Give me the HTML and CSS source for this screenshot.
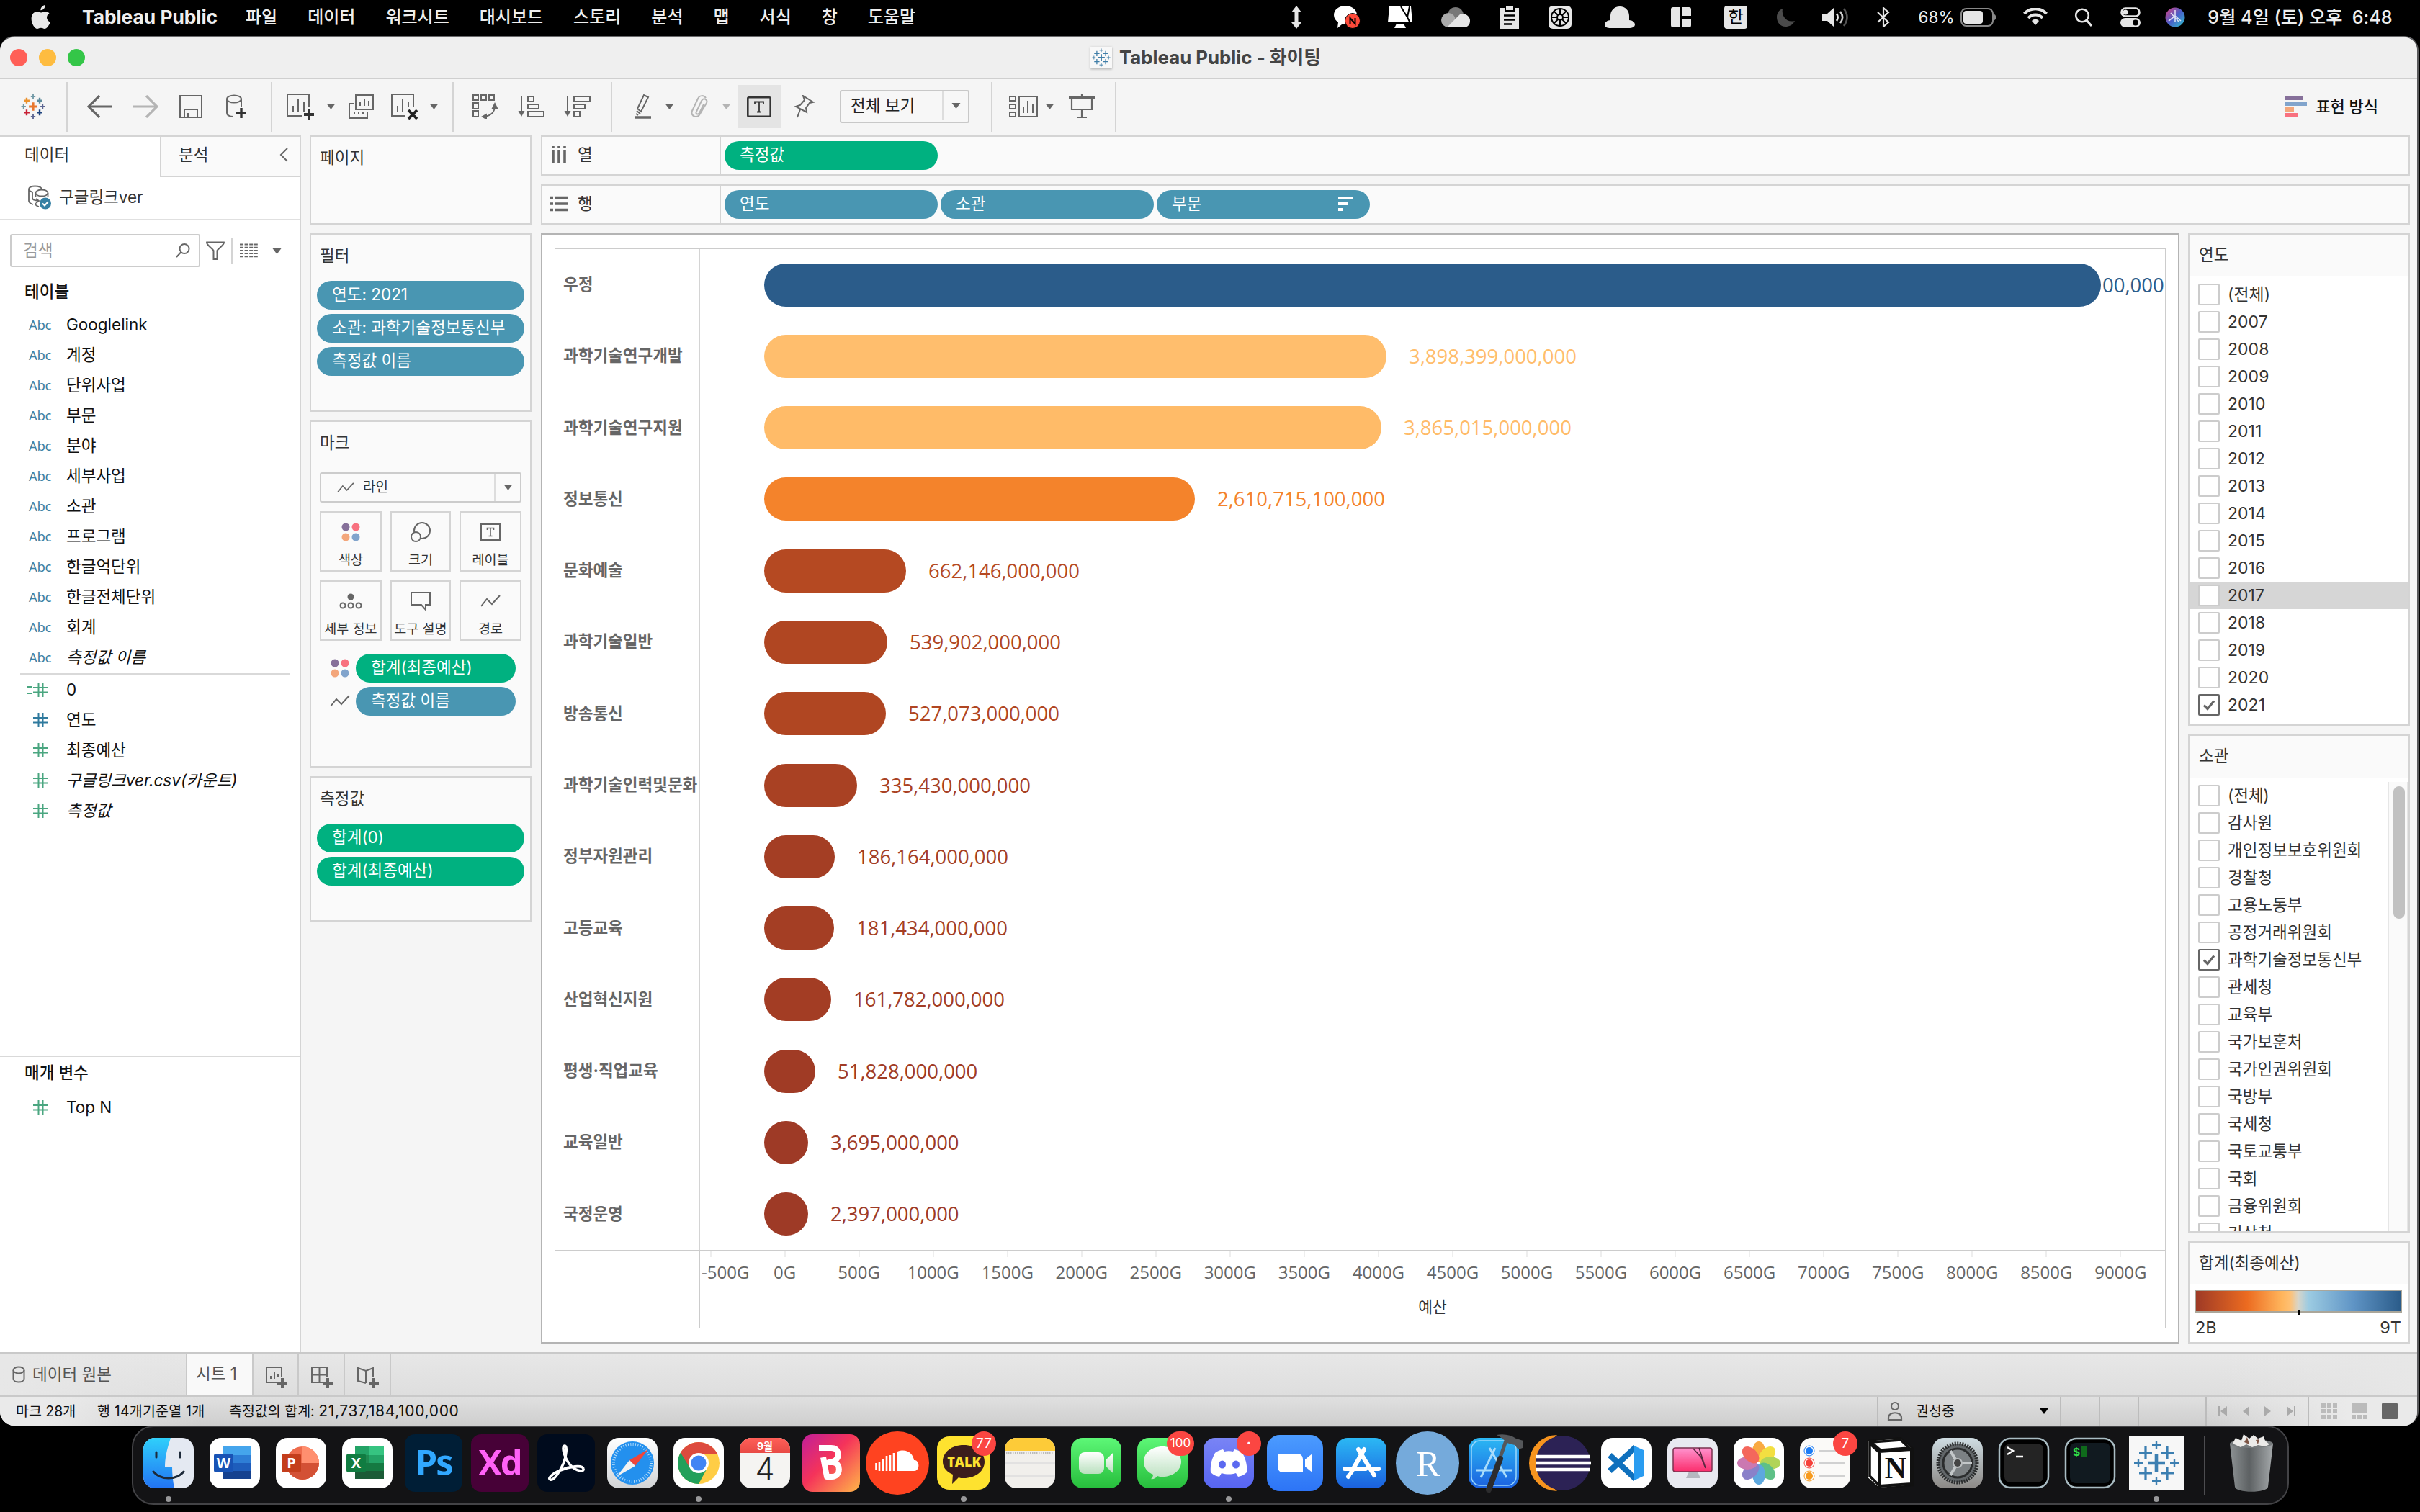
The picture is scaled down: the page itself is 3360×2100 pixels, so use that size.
FILE: index.html
```html
<!DOCTYPE html>
<html lang="ko">
<head>
<meta charset="utf-8">
<title>Tableau Public - 화이팅</title>
<link rel="stylesheet" href="styles.css">
</head>
<body>
<svg class="defs" width="0" height="0">
  <defs>
    <linearGradient id="gFinder" x1="0" y1="0" x2="0" y2="1"><stop offset="0" stop-color="#2fd0fb"/><stop offset="1" stop-color="#2273f3"/></linearGradient>
    <linearGradient id="gSilver" x1="0" y1="0" x2="0" y2="1"><stop offset="0" stop-color="#ffffff"/><stop offset="1" stop-color="#d2d4d6"/></linearGradient>
    <linearGradient id="gGreen" x1="0" y1="0" x2="0" y2="1"><stop offset="0" stop-color="#5df777"/><stop offset="1" stop-color="#27be3c"/></linearGradient>
    <linearGradient id="gGlass" x1="0" y1="0" x2="0" y2="1"><stop offset="0" stop-color="#ffffff"/><stop offset="1" stop-color="#b9e0be"/></linearGradient>
    <linearGradient id="gBlue" x1="0" y1="0" x2="0" y2="1"><stop offset="0" stop-color="#2bb8f4"/><stop offset="1" stop-color="#1b60df"/></linearGradient>
    <linearGradient id="gZoom" x1="0" y1="0" x2="0" y2="1"><stop offset="0" stop-color="#4b9bff"/><stop offset="1" stop-color="#2d74f6"/></linearGradient>
    <linearGradient id="gDiscord" x1="0" y1="0" x2="0" y2="1"><stop offset="0" stop-color="#7984f5"/><stop offset="1" stop-color="#5765f2"/></linearGradient>
    <linearGradient id="gBand" x1="0" y1="0" x2="1" y2="1"><stop offset="0" stop-color="#c01f9a"/><stop offset=".45" stop-color="#f5335a"/><stop offset="1" stop-color="#ffb648"/></linearGradient>
    <linearGradient id="gRed" x1="0" y1="0" x2="0" y2="1"><stop offset="0" stop-color="#ff5f58"/><stop offset="1" stop-color="#e84a45"/></linearGradient>
    <linearGradient id="gPink" x1="0" y1="0" x2="0" y2="1"><stop offset="0" stop-color="#ff93cf"/><stop offset="1" stop-color="#fb2d6c"/></linearGradient>
    <linearGradient id="gGear" x1="0" y1="0" x2="0" y2="1"><stop offset="0" stop-color="#cfdde3"/><stop offset="1" stop-color="#8c8986"/></linearGradient>
    <linearGradient id="gTrash" x1="0" y1="0" x2="1" y2="0"><stop offset="0" stop-color="#8d9294"/><stop offset=".45" stop-color="#5d6163"/><stop offset="1" stop-color="#a5a9ab"/></linearGradient>
    <linearGradient id="gSiri" x1="0" y1="0" x2="1" y2="1"><stop offset="0" stop-color="#e0407e"/><stop offset=".5" stop-color="#4a5fc9"/><stop offset="1" stop-color="#2ec6cf"/></linearGradient>
    <symbol id="caret" viewBox="0 0 12 8"><path d="M0 0h12L6 8z" fill="currentColor"/></symbol>
    <symbol id="hash" viewBox="0 0 20 20"><path d="M7.500 0v20M13.500 0v20M0 7h20M0 13.500h20" stroke="currentColor" stroke-width="2" fill="none"/></symbol>
    <symbol id="trend" viewBox="0 0 28 18"><path d="M1 16 9 6l7 7L27 1" stroke="#666" stroke-width="2" fill="none"/></symbol>
    <symbol id="dots" viewBox="0 0 26 26"><circle cx="6" cy="6" r="5.500" fill="#86709a"/><circle cx="20" cy="6" r="5.500" fill="#f8717f"/><circle cx="6" cy="20" r="5.500" fill="#f3a67b"/><circle cx="20" cy="20" r="5.500" fill="#81a4cc"/></symbol>
    <symbol id="tick" viewBox="0 0 30 30"><path d="m8 15.500 5 5 9-11" stroke="#666" stroke-width="3.200" fill="none"/></symbol>
    <symbol id="tableau" viewBox="0 0 64 64">
      <path d="M32 20v24M20 32h24" stroke-width="4.600"/><path d="M17 9v18M8 18h18M47 9v18M38 18h18M17 37v18M8 46h18M47 37v18M38 46h18" stroke-width="3.200"/><path d="M32 1v12M26 7h12M32 51v12M26 57h12M7 26v12M1 32h12M57 26v12M51 32h12" stroke-width="2.400"/>
    </symbol>
  </defs>
</svg>

<header class="menubar">
  <svg class="apple" width="28" height="34" viewBox="0 0 28 34"><path d="M19.800 0c.3 3.700-3 7.400-6.400 7.200C13 3.800 16.300.4 19.800 0zM25.500 11.600c-5.300 3.200-4.300 9.900 1.300 12.200C25.300 28.200 22 33 18.900 33c-2 0-2.700-1.200-5-1.200S10.600 33 8.800 33C5 33 .6 25.600.6 19 .6 12.500 4.700 9 8.600 9c2.200 0 4 1.500 5.500 1.500 1.400 0 3.500-1.600 6.200-1.600 2 0 4 .9 5.200 2.700z" fill="#e8e8e8"/></svg>
  <b class="app-name">Tableau Public</b>
  <nav class="menus"><span>파일</span><span>데이터</span><span>워크시트</span><span>대시보드</span><span>스토리</span><span>분석</span><span>맵</span><span>서식</span><span>창</span><span>도움말</span></nav>
  <div class="tray">
    <svg width="18" height="32" viewBox="0 0 18 32"><path d="m9 0 7 9h-4.500v14H16l-7 9-7-9h4.500V9H2z" fill="#e6e6e6"/></svg>
    <svg width="38" height="34" viewBox="0 0 38 34"><path d="M17 1c9 0 16 5.500 16 13S26 27 17 27c-2 0-4 0-5 0l-6 5 1-8C3 21 1 18 1 14 1 6.500 8 1 17 1z" fill="#fff"/><circle cx="27" cy="22" r="10.500" fill="#ff4a3a" stroke="#000"/><path d="M23.500 26v-8l7 8v-8" stroke="#000" stroke-width="2" fill="none"/></svg>
    <svg width="38" height="32" viewBox="0 0 38 32"><path d="M4 1h30l2 22H2zM14 25h10l3 6H11z" fill="#fff"/><path d="m20 1 9 15 3-15M29 16l3 6" stroke="#000" stroke-width="2" fill="none"/></svg>
    <svg width="42" height="28" viewBox="0 0 42 28"><circle cx="20" cy="11" r="11" fill="#777"/><circle cx="10" cy="18" r="10" fill="#aaa"/><path d="M8 28 27 9c8 0 13 4 13 10s-4 9-9 9z" fill="#e6e6e6"/></svg>
    <svg width="28" height="32" viewBox="0 0 28 32"><path d="M1 3h6v5h14V3h6v29H1z" fill="#e6e6e6"/><path d="M9 0h10v6H9z" fill="#e6e6e6"/><path d="M6 13.500h16M6 19.500h16M6 25.500h12" stroke="#000" stroke-width="2.400"/></svg>
    <svg width="32" height="32" viewBox="0 0 32 32"><rect width="32" height="32" rx="6" fill="#e6e6e6"/><circle cx="16" cy="16" r="12" fill="none" stroke="#000" stroke-width="2"/><circle cx="16" cy="16" r="4" fill="none" stroke="#000" stroke-width="2"/><path d="M16 4v8M16 20v8M4 16h8M20 16h8M7.500 7.500l5.500 5.500M19 19l5.500 5.500M24.500 7.500 19 13M13 19l-5.500 5.500" stroke="#000" stroke-width="2"/></svg>
    <svg width="42" height="30" viewBox="0 0 42 30"><path d="M21 0c8 0 13 6 13 13v6c4 0 8 3 8 6 0 4-5 5-8 5H8c-4 0-8-1-8-5 0-3 4-6 8-6v-6C8 6 13 0 21 0z" fill="#e6e6e6"/></svg>
    <svg width="28" height="28" viewBox="0 0 28 28"><path d="M3 0h9v28H3a3 3 0 0 1-3-3V3a3 3 0 0 1 3-3zM16 0h9a3 3 0 0 1 3 3v9H16zM16 16h12v9a3 3 0 0 1-3 3h-9z" fill="#e6e6e6"/></svg>
    <span class="ime">한</span>
    <svg width="28" height="28" viewBox="0 0 28 28"><path d="M9 2C7 13 15 22 26 19 23 25 18 27 13 27 6 27 1 21 1 14 1 8 4 4 9 2z" fill="#4a4a4a"/></svg>
    <svg width="38" height="28" viewBox="0 0 38 28"><path d="M1 9h7l9-8v26l-9-8H1z" fill="#e6e6e6"/><path d="M21 9c2 3 2 7 0 10" stroke="#e6e6e6" stroke-width="2.600" fill="none"/><path d="M26 6c4 5 4 11 0 16" stroke="#ccc" stroke-width="2.600" fill="none"/><path d="M31 2c6 8 6 16 0 24" stroke="#555" stroke-width="2.600" fill="none"/></svg>
    <svg width="20" height="28" viewBox="0 0 20 28"><path d="m2 7 15 14-7 6V1l7 6L2 21" stroke="#e6e6e6" stroke-width="2.200" fill="none"/></svg>
    <span class="battery">68%<svg width="50" height="26" viewBox="0 0 50 26"><rect x="1" y="1" width="44" height="24" rx="7" fill="none" stroke="#888" stroke-width="2"/><rect x="4" y="4" width="27" height="18" rx="4" fill="#e6e6e6"/><path d="M47 9c3 1 3 7 0 8z" fill="#888"/></svg></span>
    <svg width="34" height="25" viewBox="0 0 34 25"><path d="M1.500 8C10-1 24-1 32.500 8M7 14c5.500-6 14.500-6 20 0" stroke="#e6e6e6" stroke-width="4" fill="none"/><path d="m17 24-5-6c3-3 7-3 10 0z" fill="#e6e6e6"/></svg>
    <svg width="26" height="26" viewBox="0 0 26 26"><circle cx="11" cy="10.500" r="8.800" fill="none" stroke="#e6e6e6" stroke-width="2.600"/><path d="m17 17 7 8" stroke="#e6e6e6" stroke-width="3"/></svg>
    <svg width="28" height="28" viewBox="0 0 28 28"><rect x="1.500" y="1.500" width="25" height="11" rx="5.500" fill="none" stroke="#e6e6e6" stroke-width="2.600"/><circle cx="7" cy="7" r="3.500" fill="#e6e6e6"/><rect y="15" width="28" height="13" rx="6.500" fill="#e6e6e6"/><circle cx="21" cy="21.500" r="4" fill="#000"/></svg>
    <svg width="28" height="28" viewBox="0 0 28 28"><circle cx="14" cy="14" r="13.500" fill="url(#gSiri)"/><path d="m5 19 9-7 8 7M14 4v16M8 8l11 12" stroke="#fff" stroke-width="1.600" opacity=".8" fill="none"/></svg>
    <span class="clock">9월 4일 (토) 오후&nbsp; 6:48</span>
  </div>
</header>

<main class="window">
  <div class="titlebar">
    <div class="lights"><i class="red"></i><i class="yellow"></i><i class="green"></i></div>
    <div class="title"><span class="doc"><svg width="26" height="26" stroke="#3f7ea8"><use href="#tableau"/></svg></span>Tableau Public - 화이팅</div>
  </div>

  <div class="toolbar">
    <div class="tg tg1"><svg width="34" height="34" viewBox="0 0 64 64"><path d="M32 21v22M21 32h22" stroke="#e8762c" stroke-width="6"/><path d="M15 9v15M7.500 16.500h15" stroke="#eb912c" stroke-width="4.500"/><path d="M49 9v15M41.500 16.500h15" stroke="#5b8a9c" stroke-width="4.500"/><path d="M15 40v15M7.500 47.500h15" stroke="#c72035" stroke-width="4.500"/><path d="M49 40v15M41.500 47.500h15" stroke="#1f447e" stroke-width="4.500"/><path d="M32 0v12M26 6h12M7 26v12M1 32h12" stroke="#7199a6" stroke-width="3.500"/><path d="M57 26v12M51 32h12M32 52v12M26 58h12" stroke="#5c6692" stroke-width="3.500"/></svg></div>
    <div class="tg tg2">
      <svg width="36" height="32" viewBox="0 0 36 32"><path d="M35 16H2M17 1 2 16l15 15" stroke="#666" stroke-width="3.200" fill="none"/></svg>
      <svg width="36" height="32" viewBox="0 0 36 32"><path d="M1 16h33M19 1l15 15-15 15" stroke="#b4b4b4" stroke-width="3.200" fill="none"/></svg>
      <svg width="34" height="32" viewBox="0 0 34 32"><path d="M2 1h30v30H2zM8 31V20h18v11M13 31v-6" stroke="#666" stroke-width="2" fill="none"/></svg>
      <svg width="30" height="34" viewBox="0 0 30 34"><ellipse cx="11" cy="6.500" rx="10" ry="5" fill="none" stroke="#666" stroke-width="2"/><path d="M1 7v19c0 3 4 5 9 5M21 7v11" fill="none" stroke="#666" stroke-width="2"/><path d="M21 19v14M14 26h14" stroke="#333" stroke-width="3.400"/></svg>
    </div>
    <div class="tg tg3">
      <svg width="38" height="36" viewBox="0 0 38 36"><path d="M22 31H1V1h30v18M9 25v-8M16 25V7M24 25V12" stroke="#666" stroke-width="2" fill="none"/><path d="M31 22v14M24 29h14" stroke="#333" stroke-width="3.800"/></svg>
      <svg class="caret" width="11" height="7"><use href="#caret"/></svg>
      <svg width="36" height="34" viewBox="0 0 36 34"><path d="M10 1h24v20H10zM16 16v-5M22 16V6M28 16V9M7 13H1v20h25v-9M8 28v-4M14 28v-4M20 28v-4" stroke="#666" stroke-width="2" fill="none"/></svg>
      <svg width="38" height="36" viewBox="0 0 38 36"><path d="M20 31H1V1h30v18M9 25v-8M16 25V7M24 18v-6" stroke="#666" stroke-width="2" fill="none"/><path d="m24 23 12 12M36 23 24 35" stroke="#222" stroke-width="3.800"/></svg>
      <svg class="caret" width="11" height="7"><use href="#caret"/></svg>
    </div>
    <div class="tg tg4">
      <svg width="36" height="34" viewBox="0 0 36 34"><path d="M2 1h7v7H2zM13 1h7v7h-7zM24 1h7v7h-7zM2 12h7v8H2zM2 23h7v8H2z" stroke="#666" stroke-width="2" fill="none"/><path d="M32 16c0 8-5 14-15 15" stroke="#666" stroke-width="2" fill="none"/><path d="m32 11 4.500 9h-9zM13 31l8-4.500v9z" fill="#666"/></svg>
      <svg width="38" height="30" viewBox="0 0 38 30"><path d="M14 1h8v7h-8zM14 12h15v6H14zM14 22h22v7H14zM5 0v24" stroke="#666" stroke-width="2" fill="none"/><path d="M.5 21h9L5 29z" fill="#666"/></svg>
      <svg width="38" height="30" viewBox="0 0 38 30"><path d="M14 1h22v7H14zM14 12h15v6H14zM14 22h8v7h-8zM5 0v24" stroke="#666" stroke-width="2" fill="none"/><path d="M.5 21h9L5 29z" fill="#666"/></svg>
    </div>
    <div class="tg tg5">
      <svg width="24" height="34" viewBox="0 0 24 34"><path d="m4 20 9-19 6 3-10 20zM3 23l5 4M2 27l3 2" stroke="#666" stroke-width="2" fill="none"/><path d="M1 32h22" stroke="#666" stroke-width="3.500"/></svg>
      <svg class="caret" width="11" height="7"><use href="#caret"/></svg>
      <svg width="26" height="32" viewBox="0 0 26 32"><path d="m19 13-6 12c-2 3-6 1-4-2l7-15c3-5 9-2 7 3L14 26c-3 7-14 4-11-4L11 5c2-5 8-5 11-1" stroke="#b4b4b4" stroke-width="2" fill="none"/></svg>
      <svg class="caret light" width="11" height="7"><use href="#caret"/></svg>
      <span class="toggled"><svg width="34" height="29" viewBox="0 0 34 29"><rect x="1.300" y="1.300" width="31.400" height="26.400" rx="1.500" fill="none" stroke="#333" stroke-width="2.600"/><path d="M11 11V7.500h12V11M17 7.500v14M14 21.500h6" stroke="#333" stroke-width="1.800" fill="none"/></svg></span>
      <svg width="28" height="32" viewBox="0 0 28 32"><path d="m12 1 14 9-5 1-5 7 1 6L2 16l6-2 6-7zM8 20l-4 11" stroke="#666" stroke-width="2" fill="none"/></svg>
      <div class="select"><span>전체 보기</span><em><svg class="caret" width="13" height="8"><use href="#caret"/></svg></em></div>
    </div>
    <div class="tg tg6">
      <svg width="40" height="30" viewBox="0 0 40 30"><path d="M1 1h8v6H1zM1 12h8v6H1zM1 23h8v6H1zM14 1h25v28H14zM20 24v-9M26 24V7M33 24V12" stroke="#666" stroke-width="2" fill="none"/></svg>
      <svg class="caret" width="11" height="7"><use href="#caret"/></svg>
      <svg width="36" height="34" viewBox="0 0 36 34"><path d="M0 4.500h36" stroke="#666" stroke-width="4.500"/><path d="M18 0v4M4 6v15h28V6M18 21v11M11 32h14" stroke="#666" stroke-width="2.200" fill="none"/></svg>
    </div>
    <div class="showme"><svg width="32" height="32" viewBox="0 0 32 32"><path d="M0 1h25v6H0z" fill="#86709a"/><path d="M0 9h31v6H0z" fill="#81a4cc"/><path d="M0 17h13v6H0z" fill="#f3a67b"/><path d="M0 25h19v6H0z" fill="#f8717f"/></svg>표현 방식</div>
  </div>

  <div class="content">
    <aside class="datapane">
      <div class="tabs"><div class="tab on">데이터</div><div class="tab">분석<svg width="12" height="20" viewBox="0 0 12 20"><path d="m11 1-9 9 9 9" stroke="#666" stroke-width="2" fill="none"/></svg></div></div>
      <div class="source"><svg width="34" height="34" viewBox="0 0 34 34"><path d="M2 6v16c0 3 3 4 6 5M2 6c0-6 17-6 18 0M2 6c1 3 3 3 6 4M7 10v8c0 3 3 3 8 4M12 19l4 3-4 3" stroke="#666" stroke-width="1.800" fill="none"/><ellipse cx="20" cy="11" rx="8.500" ry="4.500" fill="none" stroke="#666" stroke-width="1.800"/><path d="M11.500 12v5M28.500 11v6M11 25c0 3 1 4 5 5" stroke="#666" stroke-width="1.800" fill="none"/><circle cx="25" cy="25.500" r="8" fill="#3580a4"/><path d="m21 25.500 3 3 5-5.500" stroke="#fff" stroke-width="2" fill="none"/></svg><span>구글링크ver</span></div>
      <div class="searchrow">
        <div class="search"><span>검색</span><svg width="20" height="20" viewBox="0 0 20 20"><circle cx="12" cy="7.500" r="6.500" fill="none" stroke="#666" stroke-width="2"/><path d="m7.500 12-6.500 7" stroke="#666" stroke-width="2"/></svg></div>
        <svg class="funnel" width="28" height="26" viewBox="0 0 28 26"><path d="M2 1.500h24c1 3-8 9-9.500 11.500V25h-5V13C10 10.500 1 4.500 2 1.500z" stroke="#666" stroke-width="2" fill="none"/></svg>
        <i class="vr"></i>
        <svg class="tbl" width="25" height="20" viewBox="0 0 25 20"><path d="M0 1.500h25M0 5.700h25M0 9.900h25M0 14.100h25M0 18.300h25" stroke="#666" stroke-width="2" stroke-dasharray="5 1.600"/></svg>
        <svg class="caret" width="15" height="9"><use href="#caret"/></svg>
      </div>
      <h3>테이블</h3>
      <ul class="fields">
        <li><i>Abc</i>Googlelink</li><li><i>Abc</i>계정</li><li><i>Abc</i>단위사업</li><li><i>Abc</i>부문</li><li><i>Abc</i>분야</li><li><i>Abc</i>세부사업</li><li><i>Abc</i>소관</li><li><i>Abc</i>프로그램</li><li><i>Abc</i>한글억단위</li><li><i>Abc</i>한글전체단위</li><li><i>Abc</i>회계</li><li class="it"><i>Abc</i>측정값 이름</li>
      </ul>
      <ul class="fields measures">
        <li><i class="calc"><svg width="20" height="20"><use href="#hash"/></svg></i>0</li>
        <li><i class="blue"><svg width="20" height="20"><use href="#hash"/></svg></i>연도</li>
        <li><i><svg width="20" height="20"><use href="#hash"/></svg></i>최종예산</li>
        <li class="it"><i><svg width="20" height="20"><use href="#hash"/></svg></i>구글링크ver.csv(카운트)</li>
        <li class="it"><i><svg width="20" height="20"><use href="#hash"/></svg></i>측정값</li>
      </ul>
      <div class="params"><h3>매개 변수</h3><ul class="fields measures"><li><i><svg width="20" height="20"><use href="#hash"/></svg></i>Top N</li></ul></div>
    </aside>

    <div class="cards">
      <section class="card pages"><h4>페이지</h4></section>
      <section class="card filters"><h4>필터</h4><div class="pill b">연도: 2021</div><div class="pill b">소관: 과학기술정보통신부</div><div class="pill b">측정값 이름</div></section>
      <section class="card marks"><h4>마크</h4>
        <div class="marktype"><svg width="24" height="15"><use href="#trend"/></svg><span>라인</span><em><svg class="caret" width="13" height="8"><use href="#caret"/></svg></em></div>
        <div class="buttons">
          <div><svg width="26" height="26"><use href="#dots"/></svg>색상</div>
          <div><svg width="28" height="28" viewBox="0 0 28 28"><circle cx="16" cy="12" r="11" fill="none" stroke="#666" stroke-width="2"/><circle cx="7.500" cy="20.500" r="6.500" fill="#fafafa" stroke="#666" stroke-width="2"/></svg>크기</div>
          <div><svg width="28" height="24" viewBox="0 0 28 24"><rect x="1" y="1" width="26" height="22" fill="none" stroke="#666" stroke-width="2"/><path d="M9.500 9V6.500h9V9M14 6.500v11M11.500 17.500h5" stroke="#666" stroke-width="1.600" fill="none"/></svg>레이블</div>
          <div><svg width="32" height="22" viewBox="0 0 32 22"><circle cx="16" cy="5" r="4.500" fill="#666"/><circle cx="5" cy="17" r="3.500" fill="none" stroke="#666" stroke-width="2"/><circle cx="16" cy="17" r="3.500" fill="none" stroke="#666" stroke-width="2"/><circle cx="27" cy="17" r="3.500" fill="none" stroke="#666" stroke-width="2"/></svg>세부 정보</div>
          <div><svg width="28" height="26" viewBox="0 0 28 26"><path d="M1 1h26v17h-6v7l-6-7H1z" fill="none" stroke="#666" stroke-width="2"/></svg>도구 설명</div>
          <div><svg width="28" height="18"><use href="#trend"/></svg>경로</div>
        </div>
        <div class="enc"><svg width="26" height="26"><use href="#dots"/></svg><div class="pill g">합계(최종예산)</div></div>
        <div class="enc"><svg width="28" height="18"><use href="#trend"/></svg><div class="pill b">측정값 이름</div></div>
      </section>
      <section class="card values"><h4>측정값</h4><div class="pill g">합계(0)</div><div class="pill g">합계(최종예산)</div></section>
    </div>

    <div class="sheet">
      <div class="shelf"><div class="name"><svg width="24" height="24" viewBox="0 0 24 24"><path d="M4 0v3M12 0v3M20 0v3M4 6v18M12 6v18M20 6v18" stroke="#666" stroke-width="3.600"/></svg>열</div><div class="pill g">측정값</div></div>
      <div class="shelf"><div class="name"><svg width="24" height="22" viewBox="0 0 24 22"><path d="M0 2.500h4M6.500 2.500H24M0 11h4M6.500 11H24M0 19.500h4M6.500 19.500H24" stroke="#666" stroke-width="3.600"/></svg>행</div><div class="pill b">연도</div><div class="pill b">소관</div><div class="pill b">부문<svg width="20" height="20" viewBox="0 0 20 20"><path d="M0 2h20M0 10h13M0 18h6" stroke="#fff" stroke-width="4"/></svg></div></div>
      <div class="body">
        <div class="viz">
          <div class="plot">
            <div class="row r1"><b>우정</b><div><i style="width:1856px"></i><span>00,000</span></div></div>
            <div class="row r2"><b>과학기술연구개발</b><div><i style="width:864px"></i><span>3,898,399,000,000</span></div></div>
            <div class="row r3"><b>과학기술연구지원</b><div><i style="width:857px"></i><span>3,865,015,000,000</span></div></div>
            <div class="row r4"><b>정보통신</b><div><i style="width:598px"></i><span>2,610,715,100,000</span></div></div>
            <div class="row r5"><b>문화예술</b><div><i style="width:197px"></i><span>662,146,000,000</span></div></div>
            <div class="row r6"><b>과학기술일반</b><div><i style="width:171px"></i><span>539,902,000,000</span></div></div>
            <div class="row r7"><b>방송통신</b><div><i style="width:169px"></i><span>527,073,000,000</span></div></div>
            <div class="row r8"><b>과학기술인력및문화</b><div><i style="width:129px"></i><span>335,430,000,000</span></div></div>
            <div class="row r9"><b>정부자원관리</b><div><i style="width:98px"></i><span>186,164,000,000</span></div></div>
            <div class="row r10"><b>고등교육</b><div><i style="width:97px"></i><span>181,434,000,000</span></div></div>
            <div class="row r11"><b>산업혁신지원</b><div><i style="width:93px"></i><span>161,782,000,000</span></div></div>
            <div class="row r12"><b>평생·직업교육</b><div><i style="width:71px"></i><span>51,828,000,000</span></div></div>
            <div class="row r13"><b>교육일반</b><div><i style="width:61px"></i><span>3,695,000,000</span></div></div>
            <div class="row r14"><b>국정운영</b><div><i style="width:61px"></i><span>2,397,000,000</span></div></div>
          </div>
          <div class="axis">
            <div class="ticks"><span>-500G</span><span>0G</span><span>500G</span><span>1000G</span><span>1500G</span><span>2000G</span><span>2500G</span><span>3000G</span><span>3500G</span><span>4000G</span><span>4500G</span><span>5000G</span><span>5500G</span><span>6000G</span><span>6500G</span><span>7000G</span><span>7500G</span><span>8000G</span><span>8500G</span><span>9000G</span></div>
            <div class="axis-title">예산</div>
          </div>
        </div>
        <aside class="quick">
          <section class="qf years"><h4>연도</h4><ul>
            <li><i></i>(전체)</li><li><i></i>2007</li><li><i></i>2008</li><li><i></i>2009</li><li><i></i>2010</li><li><i></i>2011</li><li><i></i>2012</li><li><i></i>2013</li><li><i></i>2014</li><li><i></i>2015</li><li><i></i>2016</li><li class="hover"><i></i>2017</li><li><i></i>2018</li><li><i></i>2019</li><li><i></i>2020</li><li class="on"><i><svg width="30" height="30"><use href="#tick"/></svg></i>2021</li>
          </ul></section>
          <section class="qf orgs"><h4>소관</h4><div class="scroll"><ul>
            <li><i></i>(전체)</li><li><i></i>감사원</li><li><i></i>개인정보보호위원회</li><li><i></i>경찰청</li><li><i></i>고용노동부</li><li><i></i>공정거래위원회</li><li class="on"><i><svg width="30" height="30"><use href="#tick"/></svg></i>과학기술정보통신부</li><li><i></i>관세청</li><li><i></i>교육부</li><li><i></i>국가보훈처</li><li><i></i>국가인권위원회</li><li><i></i>국방부</li><li><i></i>국세청</li><li><i></i>국토교통부</li><li><i></i>국회</li><li><i></i>금융위원회</li><li><i></i>기상청</li>
          </ul><div class="bar"><i></i></div></div></section>
          <section class="qf legend"><h4>합계(최종예산)</h4><div class="ramp"><i></i></div><div class="ends"><span>2B</span><span>9T</span></div></section>
        </aside>
      </div>
    </div>
  </div>

  <div class="sheettabs">
    <div class="ds"><svg width="18" height="24" viewBox="0 0 18 24"><ellipse cx="9" cy="6" rx="7.500" ry="4.500" fill="none" stroke="#666" stroke-width="2"/><path d="M1.500 6v12c0 6 15 6 15 0V6" fill="none" stroke="#666" stroke-width="2"/></svg>데이터 원본</div>
    <div class="st">시트 1</div>
    <div class="nt"><svg width="30" height="30" viewBox="0 0 30 30"><path d="M17 22H1V1h21v14M7 17v-4M12 17V7M17 15v-5" stroke="#666" stroke-width="2" fill="none"/><path d="M23 16v14M16 23h14" stroke="#666" stroke-width="4"/></svg></div>
    <div class="nt"><svg width="30" height="30" viewBox="0 0 30 30"><path d="M17 22H1V1h21v14M11.500 1v21M1 11.500h21" stroke="#666" stroke-width="2" fill="none"/><path d="M23 16v14M16 23h14" stroke="#666" stroke-width="4"/></svg></div>
    <div class="nt"><svg width="30" height="30" viewBox="0 0 30 30"><path d="M12 23 1 20V2l11 4 10-4v13M12 6v17" stroke="#666" stroke-width="2" fill="none"/><path d="M23 16v14M16 23h14" stroke="#666" stroke-width="4"/></svg></div>
  </div>
  <div class="status">
    <span class="s1">마크 28개</span><span class="s2">행 14개기준열 1개</span><span class="s3">측정값의 합계: <span>21,737,184,100,000</span></span>
    <div class="user"><svg width="22" height="28" viewBox="0 0 22 28"><circle cx="11" cy="7" r="5" fill="none" stroke="#666" stroke-width="2.200"/><path d="M2 26v-3c0-9 18-9 18 0v3z" fill="none" stroke="#666" stroke-width="2.200"/></svg><span>권성중</span><svg class="dark" width="14" height="8"><use href="#caret"/></svg></div>
    <div class="sq"></div><div class="sq"></div><div class="sq wide"></div>
    <div class="pager"><svg width="14" height="14" viewBox="0 0 14 14"><path d="M1 0h2v14H1zM13 0v14L4 7z"/></svg><svg width="9" height="14" viewBox="0 0 9 14"><path d="M9 0v14L0 7z"/></svg><svg width="9" height="14" viewBox="0 0 9 14"><path d="M0 0v14l9-7z"/></svg><svg width="14" height="14" viewBox="0 0 14 14"><path d="M11 0h2v14h-2zM1 0v14l9-7z"/></svg></div>
    <div class="views"><svg width="22" height="22" viewBox="0 0 22 22" fill="#bbb"><path d="M0 0h6v6H0zM8 0h6v6H8zM16 0h6v6h-6zM0 8h6v6H0zM8 8h6v6H8zM16 8h6v6h-6zM0 16h6v6H0zM8 16h6v6H8zM16 16h6v6h-6z"/></svg><svg width="22" height="22" viewBox="0 0 22 22" fill="#bbb"><path d="M0 0h22v14H0zM0 16h6v6H0zM8 16h6v6H8zM16 16h6v6h-6z"/></svg><svg width="22" height="22" viewBox="0 0 22 22"><rect width="22" height="22" rx="1" fill="#666"/></svg></div>
  </div>
</main>

<footer class="dock">
  <div class="app run"><svg viewBox="0 0 70 70"><rect width="70" height="70" rx="16" fill="#e4e9f2"/><path d="M38 0c-4 12-8 26-8 40h10c0 10 1 20 3 30H16A16 16 0 0 1 0 54V16A16 16 0 0 1 16 0z" fill="url(#gFinder)"/><path d="M18 20v7M51 20v7M14 47c10 12 32 12 42 0" stroke="#1d2a3a" stroke-width="3" fill="none" stroke-linecap="round"/></svg></div>
  <div class="app"><svg viewBox="0 0 70 70"><rect width="70" height="70" rx="16" fill="#fff"/><path d="M18 12h40v12H18z" fill="#45a5ec"/><path d="M18 24h40v11H18z" fill="#2e7ed6"/><path d="M18 35h40v11H18z" fill="#1e5dbc"/><path d="M18 46h40v11H18z" fill="#15418f"/><rect x="6" y="22" width="27" height="26" rx="3" fill="#1853b5"/><text x="19.500" y="42" class="off">W</text></svg></div>
  <div class="app"><svg viewBox="0 0 70 70"><rect width="70" height="70" rx="16" fill="#fff"/><circle cx="37" cy="35" r="23" fill="#ee6c4d"/><path d="M37 12a23 23 0 0 1 23 23H37z" fill="#ff8f6f"/><path d="M60 35a23 23 0 0 1-46 0z" fill="#d35135"/><rect x="8" y="22" width="27" height="26" rx="3" fill="#c43e1c"/><text x="21.500" y="42" class="off">P</text></svg></div>
  <div class="app"><svg viewBox="0 0 70 70"><rect width="70" height="70" rx="16" fill="#fff"/><path d="M18 12h20v12H18z" fill="#23a366"/><path d="M38 12h20v12H38z" fill="#36c481"/><path d="M18 24h20v11H18z" fill="#1f8a50"/><path d="M38 24h20v11H38z" fill="#23a366"/><path d="M18 35h40v11H18z" fill="#157a42"/><path d="M18 46h40v11H18z" fill="#1b5b37"/><rect x="6" y="22" width="27" height="26" rx="3" fill="#107c41"/><text x="19.500" y="42" class="off">X</text></svg></div>
  <div class="app a80"><svg viewBox="0 0 80 80"><rect width="80" height="80" rx="14" fill="#001e36"/><text x="40" y="57" class="adobe" fill="#31a8ff">Ps</text></svg></div>
  <div class="app a80"><svg viewBox="0 0 80 80"><rect width="80" height="80" rx="14" fill="#470137"/><text x="40" y="57" class="adobe" fill="#ff61f6">Xd</text></svg></div>
  <div class="app a80"><svg viewBox="0 0 80 80"><rect width="80" height="80" rx="14" fill="#000b1d"/><path d="M38 16c-5 1 0 19 9 28 7 7 18 9 17 4-1-6-20-3-32 2C20 55 14 62 18 63c5 2 14-12 19-24 3-9 5-23 1-23z" fill="none" stroke="#fff" stroke-width="3.600"/></svg></div>
  <div class="app"><svg viewBox="0 0 70 70"><rect width="70" height="70" rx="16" fill="url(#gSilver)"/><circle cx="35" cy="35" r="30" fill="#2390ee"/><circle cx="35" cy="35" r="26" fill="none" stroke="#b8defa" stroke-width="4" stroke-dasharray="1 2.400"/><path d="m57 16-18 23-8-8z" fill="#f0453a"/><path d="m13 54 18-23 8 8z" fill="#f2f2f2"/></svg></div>
  <div class="app run"><svg viewBox="0 0 70 70"><rect width="70" height="70" rx="16" fill="#fff"/><circle cx="35" cy="35" r="29" fill="#ffcd45"/><path d="M35 35 9.900 20.500A29 29 0 0 0 35 64l12-22z" fill="#22a05b"/><path d="M9.900 20.500a29 29 0 0 1 50.200 0L62 23H35L23 42z" fill="#dd4b3e"/><circle cx="35" cy="35" r="14" fill="#fff"/><circle cx="35" cy="35" r="10.500" fill="#4285f4"/></svg></div>
  <div class="app"><svg viewBox="0 0 70 70"><rect width="70" height="70" rx="16" fill="#f5f4f2"/><path d="M0 21v-5A16 16 0 0 1 16 0h38a16 16 0 0 1 16 16v5z" fill="url(#gRed)"/><text x="35" y="17" class="cal-m">9월</text><text x="35" y="59" class="cal-d">4</text></svg></div>
  <div class="app a80"><svg viewBox="0 0 80 80"><rect width="80" height="80" rx="14" fill="url(#gBand)"/><path d="M23 19h17c10 0 13 11 6 17-3 2-6 3-9 3h5c12 0 12 20-1 20h-7l-5-27" fill="none" stroke="#fff" stroke-width="8" stroke-linejoin="round"/></svg></div>
  <div class="app a88"><svg viewBox="0 0 88 88"><circle cx="44" cy="44" r="44" fill="#ff4320"/><path d="M44 55V28c14-5 22 4 23 12 8-1 9 15 0 15z" fill="#fff"/><path d="M39 55V30M34 55V33M29 55V34M24 55V38M19 55V42M14.500 53v-9" stroke="#fff" stroke-width="2.600"/></svg></div>
  <div class="app a74 run"><svg viewBox="0 0 74 74"><rect width="74" height="74" rx="17" fill="#fee22f"/><path d="M37 12c17 0 29 10 29 23S54 58 37 58c-3 0-5 0-7-1l-9 9 1-13C13 49 8 43 8 35c0-13 12-23 29-23z" fill="#3c1d1c"/><text x="37.500" y="42" class="talk">TALK</text></svg><em>77</em></div>
  <div class="app"><svg viewBox="0 0 70 70"><rect width="70" height="70" rx="16" fill="#f1efec"/><path d="M0 18v-2A16 16 0 0 1 16 0h38a16 16 0 0 1 16 16v2z" fill="#fdcb38"/><path d="M0 35h70M0 53h70" stroke="#ddd" stroke-width="1.500"/><path d="M2 21h66" stroke="#bbb" stroke-width="2" stroke-dasharray="1.500 1.500"/></svg></div>
  <div class="app"><svg viewBox="0 0 70 70"><rect width="70" height="70" rx="16" fill="url(#gGreen)"/><rect x="11" y="20" width="35" height="30" rx="8" fill="url(#gGlass)"/><path d="m48 31 9-9c1-1 2 0 2 1v24c0 1-1 2-2 1l-9-9z" fill="url(#gGlass)"/></svg></div>
  <div class="app"><svg viewBox="0 0 70 70"><rect width="70" height="70" rx="16" fill="url(#gGreen)"/><path d="M35 12c15 0 26 9 26 21S50 54 35 54c-2 0-5 0-7-1-2 3-6 5-9 4 2-1 3-4 3-6C14 48 9 41 9 33c0-12 11-21 26-21z" fill="url(#gGlass)"/></svg><em class="w">100</em></div>
  <div class="app run"><svg viewBox="0 0 70 70"><rect width="70" height="70" rx="16" fill="url(#gDiscord)"/><path d="M27 16c-5 1-9 3-11 5-5 9-7 18-6 27 4 4 8 5 12 6l3-5c7 2 13 2 20 0l3 5c4-1 8-2 12-6 1-9-1-18-6-27-2-2-6-4-11-5l-2 3c-4-1-8-1-12 0z" fill="#fff"/><ellipse cx="26" cy="37" rx="5" ry="5.500" fill="#5b69f0"/><ellipse cx="45" cy="37" rx="5" ry="5.500" fill="#5b69f0"/></svg><em><b>·</b></em></div>
  <div class="app a78"><svg viewBox="0 0 78 78"><rect width="78" height="78" rx="18" fill="url(#gZoom)"/><path d="M15 26h27c5 0 8 3 8 8v18H23c-5 0-8-3-8-8zM53 34l10-8v26l-10-8z" fill="#fff"/></svg></div>
  <div class="app"><svg viewBox="0 0 70 70"><rect width="70" height="70" rx="16" fill="url(#gBlue)"/><path d="M39 16 21 48M31 16l22 36M12 43h29M50 43h9M18 52l-1 2" stroke="#fff" stroke-width="6" stroke-linecap="round"/></svg></div>
  <div class="app a88"><svg viewBox="0 0 88 88"><circle cx="44" cy="44" r="44" fill="#75aadb"/><text x="45" y="62" class="rr">R</text></svg></div>
  <div class="app a80"><svg viewBox="0 0 80 80"><rect x="5" y="5" width="70" height="70" rx="16" fill="url(#gBlue)"/><rect x="9" y="9" width="62" height="62" rx="12" fill="none" stroke="#9bd8fb" stroke-width="1.500"/><path d="M42 19 22 60M34 19l24 41M15 50h50" stroke="#a8dcfb" stroke-width="3"/><path d="m57 9-9 26" stroke="#55575a" stroke-width="5" stroke-linecap="round" fill="none"/><path d="m49 34-16 43" stroke="#2c2c2e" stroke-width="8" stroke-linecap="round" fill="none"/><path d="M44 1c10-2 20 0 27 5l10 3-1 10-6 2-5-6-11-3c-3-4-8-8-14-11z" fill="#55575a"/></svg></div>
  <div class="app a88"><svg viewBox="0 0 88 88"><path d="M40 5a39 39 0 0 0 0 78A50 50 0 0 1 40 5z" fill="#f7941e"/><circle cx="48" cy="44" r="38" fill="#2c2255"/><path d="M11 35h75M10 44h77M11 53h75" stroke="#fff" stroke-width="4.500"/></svg></div>
  <div class="app"><svg viewBox="0 0 70 70"><rect width="70" height="70" rx="16" fill="#fff"/><path d="m12 24 36 33M12 46l36-33" stroke="#0f70bd" stroke-width="8"/><path d="m46 11 13 6v36l-13 6z" fill="#2a9cf0"/></svg></div>
  <div class="app"><svg viewBox="0 0 70 70"><rect width="70" height="70" rx="16" fill="#e8e9f0"/><path d="M26 56h20l-4-9H30z" fill="#b5b7bf"/><rect x="8" y="14" width="54" height="33" rx="3" fill="url(#gPink)" stroke="#7b3350" stroke-width="1.500"/><path d="m36 15 11 12 6 15M44 14l9 28" stroke="#5b2740" stroke-width="1.600" fill="none"/></svg></div>
  <div class="app"><svg viewBox="0 0 70 70"><rect width="70" height="70" rx="16" fill="#fff"/><g opacity=".9"><ellipse cx="35" cy="19" rx="9" ry="14" fill="#f9a12e"/><ellipse cx="35" cy="19" rx="9" ry="14" fill="#f2dc2d" transform="rotate(45 35 35)"/><ellipse cx="35" cy="19" rx="9" ry="14" fill="#a9d046" transform="rotate(90 35 35)"/><ellipse cx="35" cy="19" rx="9" ry="14" fill="#4dba7b" transform="rotate(135 35 35)"/><ellipse cx="35" cy="19" rx="9" ry="14" fill="#4c9fdb" transform="rotate(180 35 35)"/><ellipse cx="35" cy="19" rx="9" ry="14" fill="#7d74c4" transform="rotate(225 35 35)"/><ellipse cx="35" cy="19" rx="9" ry="14" fill="#c66aa9" transform="rotate(270 35 35)"/><ellipse cx="35" cy="19" rx="9" ry="14" fill="#f3574b" transform="rotate(315 35 35)"/></g></svg></div>
  <div class="app"><svg viewBox="0 0 70 70"><rect width="70" height="70" rx="16" fill="#fbfaf8"/><circle cx="13" cy="18" r="5" fill="#1b7cf6"/><circle cx="13" cy="35" r="5" fill="#f6413a"/><circle cx="13" cy="53" r="5" fill="#f79a1c"/><g fill="none"><circle cx="13" cy="18" r="7" stroke="#1b7cf6"/><circle cx="13" cy="35" r="7" stroke="#f6413a"/><circle cx="13" cy="53" r="7" stroke="#f79a1c"/></g><path d="M26 18h36M26 35h36M26 53h36" stroke="#c4c4c4" stroke-width="1.600"/></svg><em>7</em></div>
  <div class="app a74"><svg viewBox="0 0 74 74"><path d="M4 6 50 2l18 16v50l-48 4L4 58z" fill="#fff" stroke="#111" stroke-width="2"/><path d="m7 10 13 12v46L7 55zM9 8l41-3 12 11-40 3z" fill="#fff" stroke="#111" stroke-width="3.500"/><path d="m20 21 45-3v48l-45 3z" fill="#fff" stroke="#111" stroke-width="4"/><text x="43" y="58" class="notion">N</text></svg></div>
  <div class="app"><svg viewBox="0 0 70 70"><rect width="70" height="70" rx="16" fill="url(#gGear)"/><circle cx="35" cy="35" r="27" fill="#62676a" stroke="#2b2d2e" stroke-width="5" stroke-dasharray="2 1.500"/><circle cx="35" cy="35" r="20" fill="#7c8184" stroke="#2b2d2e" stroke-width="3"/><path d="M35 35h20M35 35 25 18M35 35 25 52" stroke="#c3c7c9" stroke-width="4"/><circle cx="35" cy="35" r="6" fill="#444" stroke="#b9bdbf" stroke-width="2"/></svg></div>
  <div class="app"><svg viewBox="0 0 70 70"><rect x="1" y="1" width="68" height="68" rx="15" fill="#000" stroke="#a9bcc3" stroke-width="2.500"/><rect x="8" y="8" width="54" height="54" rx="8" fill="#242424"/><path d="m12 13 8 5-8 5M24 26h10" stroke="#fff" stroke-width="2.400" fill="none"/></svg></div>
  <div class="app"><svg viewBox="0 0 70 70"><rect x="1" y="1" width="68" height="68" rx="15" fill="#000" stroke="#a9bcc3" stroke-width="2.500"/><rect x="7" y="7" width="56" height="56" rx="8" fill="#111a20"/><text x="11" y="25" class="term">$</text><rect x="22" y="11" width="8" height="15" fill="#0f6a1b"/></svg></div>
  <div class="app a76 run"><svg viewBox="0 0 76 76"><rect width="76" height="76" fill="#f7f7f7"/><g transform="translate(6 6)" stroke="#3c7fb1"><use href="#tableau" width="64" height="64"/></g></svg></div>
  <i class="rule"></i>
  <div class="app trash"><svg viewBox="0 0 64 82"><path d="M2 14h60l-7 60c-1 9-45 9-46 0z" fill="url(#gTrash)"/><ellipse cx="32" cy="14" rx="30" ry="6" fill="#777b7d"/><path d="m6 14 4-8 8 4 3-9 8 6 6-5 6 5 8-3 2 6 6 5-6 3-10-2-8 3-8-4-8 4z" fill="#ecebe9"/><path d="m22 12 4-7 3 10zM38 9l3 6 2-7z" fill="#7d5545"/></svg></div>
</footer>
</body>
</html>
```
FILE: styles.css
```css
* { box-sizing: border-box; }
body {
  margin: 0; width: 3360px; height: 2100px; overflow: hidden; background: #000;
  display: flex; flex-direction: column;
  font: 22.5px/30px Inter, "Noto Sans CJK KR", sans-serif; color: #333; white-space: nowrap;
}
.defs { position: absolute; }
svg { flex: none; display: block; }
ul { list-style: none; margin: 0; padding: 0; }
i, em { font-style: normal; }
h3, h4 { margin: 0; font-weight: 400; font-size: inherit; }

/* menu bar */
.menubar { height: 50px; flex: none; display: flex; align-items: center; color: #eee; font-size: 24px; padding-bottom: 3px; }
.apple { margin-left: 43px; }
.app-name { margin-left: 43px; width: 227px; font-size: 26.3px; }
.menus { display: flex; gap: 42px; font-weight: 500; }
.tray {
  margin-left: auto; margin-right: 22px; display: grid; align-items: center; justify-items: center;
  grid-template-columns: 70px 70px 78px 78px 70px 70px 96px 74px 78px 62px 74px 60px 146px 70px 64px 66px 58px 289px;
}
.ime { width: 32px; height: 32px; border-radius: 4px; background: #e6e6e6; color: #000; font-size: 23px; line-height: 31px; text-align: center; }
.battery { display: flex; align-items: center; gap: 9px; font-size: 22.5px; }
.clock { font-size: 25.2px; font-weight: 500; }

/* window frame */
.window { width: 3358px; height: 1930px; flex: none; border-top: 2px solid #69696b; border-right: 2px solid #58585a; border-radius: 20px; background: #f5f5f5; overflow: hidden; display: flex; flex-direction: column; }
.titlebar { height: 58px; flex: none; background: #efefef; border-bottom: 2px solid #cfcfcf; display: flex; align-items: center; }
.lights { display: flex; gap: 16px; padding-left: 14px; width: 1514px; }
.lights i { width: 24px; height: 24px; border-radius: 50%; }
.red { background: #ff5f57; } .yellow { background: #febc40; } .green { background: #34c648; }
.title { display: flex; align-items: center; gap: 10px; font-weight: 700; font-size: 25.8px; color: #444; padding-bottom: 1px; }
.doc { width: 30px; height: 30px; background: #f8f8f8; box-shadow: 0 1px 3px #aaa; padding: 2px; }

.toolbar { height: 78px; flex: none; display: flex; align-items: center; }
.tg { height: 70px; border-right: 2px solid #d4d4d4; display: grid; align-items: center; justify-items: center; padding-bottom: 2px; }
.tg1 { width: 94px; }
.tg2 { width: 284px; padding-left: 13px; grid-template-columns: 63px 63px 64px 64px; }
.tg3 { width: 252px; padding-left: 8px; grid-template-columns: 62px 22px 64px 56px 24px; }
.tg4 { width: 220px; padding-left: 11px; grid-template-columns: 64px 66px 62px; }
.tg5 { width: 528px; padding-left: 18px; grid-template-columns: 50px 22px 62px 12px 80px 46px 232px; }
.tg6 { width: 172px; padding-left: 15px; grid-template-columns: 56px 16px 74px; }
.caret { color: #666; } .caret.light { color: #b4b4b4; } .dark { color: #000; }
.toggled { width: 60px; height: 60px; background: #e4e4e4; display: grid; place-items: center; }
.select { width: 180px; height: 46px; border: 2px solid #c8c8c8; border-radius: 3px; background: #f7f7f7; display: flex; align-items: center; font-size: 22.5px; color: #222; padding: 0 0 2px 13px; }
.select span { flex: 1; }
.select em, .marktype em { width: 36px; align-self: stretch; border-left: 2px solid #ddd; display: grid; place-items: center; }
.showme { margin-left: auto; margin-right: 54px; display: flex; align-items: center; gap: 11px; font-size: 22px; color: #111; font-weight: 500; padding-bottom: 3px; }

/* data pane */
.content { height: 1690px; flex: none; display: flex; }
.datapane { width: 418px; background: #fff; border-top: 2px solid #d4d4d4; border-right: 2px solid #d4d4d4; display: flex; flex-direction: column; color: #111; }
.tabs { height: 56px; flex: none; display: flex; line-height: 49px; color: #333; }
.tab { width: 194px; display: flex; justify-content: space-between; padding: 0 16px 0 24px; border-left: 2px solid #d4d4d4; border-bottom: 2px solid #d4d4d4; background: #fafafa; }
.tab svg { margin-top: 15px; }
.tab.on { width: 222px; padding-left: 34px; border: 0; background: #fff; }
.source { height: 60px; flex: none; display: flex; align-items: center; padding: 0 0 2px 38px; gap: 10px; border-bottom: 2px solid #e0e0e0; color: #333; }
.searchrow { height: 86px; flex: none; display: flex; align-items: center; padding: 0 0 2px 14px; }
.search { width: 264px; height: 46px; border: 2px solid #ccc; border-radius: 3px; display: flex; align-items: center; justify-content: space-between; padding: 0 12px 1px 16px; color: #999; }
.funnel { margin-left: 7px; }
.vr { width: 2px; height: 36px; background: #d4d4d4; margin: 0 10px 0 8px; }
.tbl { margin-right: 19px; }
h3 { height: 38px; line-height: 36px; padding-left: 34px; font-weight: 500; margin-top: -5px; }
.fields li { height: 42px; line-height: 40px; display: flex; align-items: center; }
.fields i { width: 92px; padding-left: 40px; flex: none; color: #3e81a3; font: 18.5px/46px "Noto Sans", sans-serif; letter-spacing: -.4px; }
.datapane > .fields:not(.measures) { padding-top: 5px; }
.fields .it { font-style: italic; }
.datapane > .measures { margin: 1px 12px 0 0; }
.datapane > .measures::before { content: ""; display: block; height: 2px; background: #d9d9d9; margin-left: 28px; margin-right: 2px; }
.measures i { color: #4aa680; padding-left: 46px; }
.measures .blue { color: #2f7a9e; }
.measures .calc { display: flex; align-items: center; padding-left: 38px; gap: 2px; }
.measures .calc::before { content: ""; width: 6px; height: 7px; border: solid #4aa680; border-width: 2px 0; }
.params { margin-top: auto; height: 412px; border-top: 2px solid #d9d9d9; padding-top: 9px; }
.params .measures { padding-top: 7px; }

/* cards */
.cards { width: 308px; margin: 0 13px 0 12px; display: flex; flex-direction: column; gap: 12px; }
.card { border: 2px solid #d4d4d4; background: #fafafa; padding: 0 8px; display: flex; flex-direction: column; gap: 6px; }
.card h4 { padding-left: 4px; }
.pages { height: 124px; } .pages h4 { line-height: 57px; }
.filters { height: 248px; } .filters h4, .marks h4, .values h4 { line-height: 58px; }
.marks { height: 482px; } .values { height: 202px; }
.pill { height: 40px; flex: none; border-radius: 20px; color: #fff; line-height: 38px; padding-left: 21px; font-size: 22.5px; }
.b { background: #4996b2; } .g { background: #00b180; }
.marktype { height: 42px; flex: none; margin: 6px 4px 0; border: 2px solid #ccc; border-radius: 3px; display: flex; align-items: center; padding-left: 22px; gap: 12px; font-size: 19px; }
.marktype span { flex: 1; }
.buttons { margin: 6px 4px 12px; display: grid; grid-template-columns: 86px 84px 86px; gap: 12px 12px; font-size: 18.5px; }
.buttons div { height: 84px; border: 2px solid #d4d4d4; display: grid; grid-template-rows: 53px 24px; place-items: center; line-height: 20px; }
.enc { display: flex; align-items: center; padding-left: 18px; }
.enc svg { width: 28px; }
.enc .pill { margin-left: 8px; width: 222px; }

/* sheet */
.sheet { width: 2595px; display: flex; flex-direction: column; gap: 12px; }
.shelf { height: 56px; flex: none; border: 2px solid #d4d4d4; background: #fafafa; display: flex; align-items: center; gap: 4px; }
.shelf .name { width: 248px; height: 52px; border-right: 2px solid #d4d4d4; display: flex; align-items: center; gap: 14px; padding: 0 0 3px 11px; margin-right: 1px; }
.shelf .pill { width: 296px; }
.shelf .pill svg { float: right; margin: 9px 24px 0 0; }
.body { display: flex; gap: 12px; height: 1542px; }
.viz { width: 2275px; border: 2px solid #b4b4b4; background: #fff; padding: 18px 16px 0 17px; }
.plot { height: 1394px; border: solid #ccc; border-width: 2px 2px 2px 0; display: grid; grid-template-rows: repeat(14, 1fr); }
.row { display: flex; }
.row b { width: 202px; flex: none; overflow: hidden; border-right: 2px solid #d4d4d4; padding-left: 12px; line-height: 98px; font-weight: 700; color: #666; font-size: 22.5px; }
.row div { flex: 1; display: flex; align-items: center; padding-left: 89px; }
.row i { height: 60px; border-radius: 30px; background: var(--c); }
.row span { margin-left: 31px; font: 500 27.5px/40px "Open Sans", sans-serif; color: var(--c); }
.row.r1 span { margin-left: 2px; }
.r1 { --c: #2b5c8a; } .r2 { --c: #ffbe6d; } .r3 { --c: #ffbb68; } .r4 { --c: #f4832b; }
.r5 { --c: #b54922; } .r6 { --c: #b04622; } .r7 { --c: #b04622; } .r8 { --c: #a94123; }
.r9 { --c: #a43e24; } .r10 { --c: #a43e24; } .r11 { --c: #a33d24; } .r12 { --c: #a03b25; } .r13, .r14 { --c: #9e3a26; }
.axis { height: 107px; margin-left: 200px; border: solid #ccc; border-width: 0 2px; color: #666; }
.ticks { display: grid; grid-template-columns: 66px repeat(19, 103.06px); text-align: center; font: 24px/34px "Open Sans", sans-serif; }
.ticks span::before { content: ""; display: block; width: 2px; height: 8px; margin: 0 auto 4px; background: #eee; }
.ticks span:first-child { text-align: left; padding-left: 2px; }
.ticks span:first-child::before { margin-left: 12px; }
.axis-title { text-align: center; font-size: 21.5px; line-height: 34px; margin-top: 14px; color: #333; }

/* filter cards on the right */
.quick { width: 308px; display: flex; flex-direction: column; gap: 12px; }
.qf { border: 2px solid #d4d4d4; background: #fff; }
.qf h4 { height: 58px; line-height: 56px; padding-left: 13px; background: #fafafa; }
.years { height: 684px; } .orgs { height: 692px; overflow: hidden; }
.years li { font-size: 22.9px; letter-spacing: .1px; }
.qf ul { padding-top: 6px; }
.qf li { height: 38px; display: flex; align-items: center; padding-left: 12px; gap: 11px; line-height: 34px; }
.qf li i { width: 30px; height: 30px; border: 2px solid #ccc; border-radius: 2px; background: #fff; }
.qf li.on i { border-color: #666; }
.qf li.on svg { margin: -2px; }
.hover { background: #d6d6d6; }
.scroll { display: flex; justify-content: space-between; }
.bar { width: 29px; height: 630px; margin-top: 6px; border: solid #e6e6e6; border-width: 0 2px; background: #fafafa; padding: 6px 0 0 6px; }
.bar i { display: block; width: 16px; height: 184px; border-radius: 8px; background: #c1c1c1; }
.legend { height: 142px; }
.ramp { width: 288px; height: 32px; margin: 7px 0 0 7px; border: 2px solid #aaa69a; display: flex; justify-content: center;
  background: linear-gradient(90deg, #9e3a26, #ec6b20 25%, #ffb55c 42%, #ffc072 46%, #d8d5c9 50%, #9ccbe2 55%, #5f94c5 77%, #2b5c8a); }
.ramp i { width: 2px; height: 8px; background: #000; margin: 26px 0 0 1px; }
.ends { display: flex; justify-content: space-between; padding: 3px 10px 0 8px; font-size: 23.5px; line-height: 36px; }

/* bottom strips */
.sheettabs { height: 62px; flex: none; border-top: 2px solid #c9c9c9; border-bottom: 2px solid #c9c9c9; display: flex; color: #555; line-height: 56px; background: linear-gradient(90deg, #e7e7e7, transparent 320px, transparent 3080px, #e7e7e7), linear-gradient(#e7e7e7, #dedede); }
.ds { width: 258px; display: flex; align-items: center; gap: 10px; padding-left: 17px; }
.st { width: 94px; border: solid #c9c9c9; border-width: 0 2px; background: #f9f9f9; padding-left: 12px; }
.nt { width: 64px; border-right: 2px solid #c9c9c9; display: grid; place-items: center; padding: 8px 0 0 2px; }
.nt:nth-child(3) { width: 63px; }
.status { height: 40px; flex: none; display: flex; font-size: 19.5px; line-height: 40px; color: #111; background: linear-gradient(90deg, #eaeaea 60px, transparent 280px, transparent 3060px, #eaeaea 3260px), linear-gradient(#e0e0e0, #cecece); }
.s1 { width: 113px; margin-left: 22px; } .s2 { width: 183px; letter-spacing: .2px; } .s3 { width: 2288px; }
.s3 span { font-size: 21px; letter-spacing: .65px; }
.user { width: 256px; border: solid #bcbcbc; border-width: 0 2px; display: flex; align-items: center; padding: 0 15px 0 12px; gap: 18px; }
.user span { flex: 1; }
.sq { width: 54px; border-right: 2px solid #bcbcbc; } .sq.wide { width: 94px; }
.pager { width: 142px; border-right: 2px solid #bcbcbc; display: flex; align-items: center; justify-content: space-between; padding: 0 16px 0 15px; fill: #aaa; }
.views { display: flex; align-items: center; gap: 20px; padding-left: 17px; }

/* dock */
.dock { width: 2995px; height: 110px; flex: none; margin-left: 183px; border: 2px solid #434346; border-radius: 30px; background: #131315; display: flex; padding-left: 3px; }
.app { width: 92px; height: 100px; position: relative; display: grid; place-items: center; flex: none; }
.app > svg { width: 70px; height: 70px; overflow: visible; }
.a74 > svg { width: 74px; height: 74px; } .a76 > svg { width: 76px; height: 76px; } .a78 > svg { width: 78px; height: 78px; }
.a80 > svg { width: 80px; height: 80px; } .a88 > svg { width: 88px; height: 88px; }
.run::after { content: ""; position: absolute; left: 42px; top: 96px; width: 8px; height: 8px; border-radius: 50%; background: #98989a; }
.app em { position: absolute; left: 57px; top: 6px; min-width: 34px; height: 34px; border-radius: 17px; background: #fb4642; color: #fff; font-size: 19px; line-height: 33px; text-align: center; }
.app em.w { left: 52px; width: 38px; font-size: 17px; }
.rule { width: 2px; height: 82px; margin: 12px 20px 0; background: #4d4d50; }
.trash { width: 88px; } .trash > svg { width: 64px; height: 82px; }
text { text-anchor: middle; font-family: Inter, "Noto Sans CJK KR", sans-serif; }
.off { font: 700 20px "Open Sans", sans-serif; fill: #fff; }
.adobe { font: 700 49px "Open Sans", sans-serif; letter-spacing: -2px; }
.cal-m { font-size: 14px; font-weight: 700; fill: #fff; }
.cal-d { font: 300 43px Inter, sans-serif; fill: #222; }
.talk { font: 800 18px "Open Sans", sans-serif; fill: #fee22f; }
.rr { font: 50px "Liberation Serif", serif; fill: #fff; }
.notion { font: 700 42px "Liberation Serif", serif; fill: #111; }
.term { font: 700 17px "Liberation Mono", monospace; fill: #2fe04a; text-anchor: start; }
```
